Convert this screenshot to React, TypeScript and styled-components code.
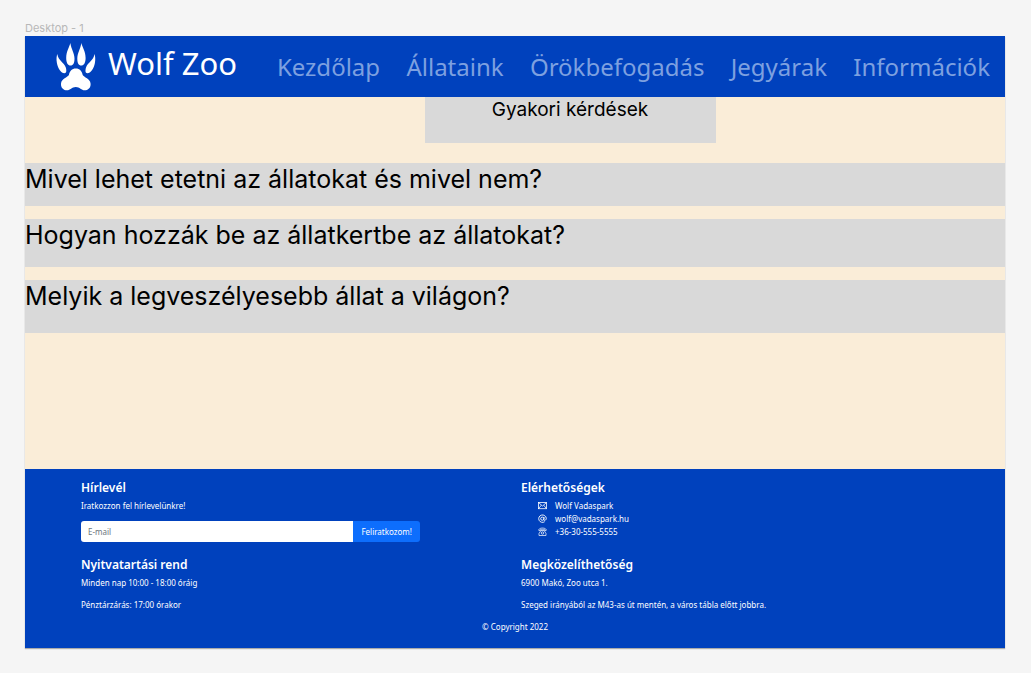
import React from "react";
import styled, { createGlobalStyle } from "styled-components";

const blue = "#0041bd";
const grey = "#d9d9d9";
const cream = "#faedd8";
const uiFont = '"Noto Sans", "Open Sans", sans-serif';
const bodyFont = 'Inter, "Liberation Sans", sans-serif';

const GlobalStyle = createGlobalStyle`
  *, *::before, *::after { box-sizing: border-box; }
  body { margin: 0; background: #f5f5f5; font-family: ${bodyFont}; }
  h1, h2, p, ul { margin: 0; padding: 0; }
  ul { list-style: none; }
`;

const Page = styled.div`
  display: flex;
  flex-direction: column;
  min-height: 100vh;
  padding: 20px 26px 25px 25px;
`;

const FrameLabel = styled.p`
  color: #b8b8b8;
  font-size: 11px;
  line-height: 16px;
`;

const Frame = styled.div`
  flex: 1;
  display: flex;
  flex-direction: column;
  background: ${cream};
  box-shadow: 0 1px 1px rgba(0, 0, 0, 0.3);
`;

const Header = styled.header`
  display: flex;
  align-items: center;
  gap: 40px;
  min-height: 61px;
  padding: 0 15px 0 31px;
  background: ${blue};
  font-family: ${uiFont};
`;

const Brand = styled.a`
  display: flex;
  align-items: center;
  gap: 12px;
  color: #fff;
  text-decoration: none;
  white-space: nowrap;
`;

const BrandName = styled.span`
  padding-bottom: 8px;
  font-size: 31px;
  line-height: 40px;
`;

const Nav = styled.nav`
  flex: 1;
  display: flex;
  justify-content: space-between;
  gap: 12px;
`;

const NavLink = styled.a`
  color: #7da0e0;
  font-size: 24px;
  line-height: 32px;
  text-decoration: none;
`;

const Main = styled.main`
  flex: 1;
  display: flex;
  flex-direction: column;
`;

const TitleRow = styled.div`
  display: flex;
  justify-content: center;
  padding-left: 110px;
  margin-bottom: 20px;
`;

const Title = styled.h1`
  width: 291px;
  max-width: 100%;
  min-height: 46px;
  background: ${grey};
  font-size: 19px;
  font-weight: 400;
  line-height: 25px;
  text-align: center;
`;

const Questions = styled.ul`
  display: flex;
  flex-direction: column;
  gap: 13px;
`;

const Question = styled.li<{ $height: number }>`
  min-height: ${(p) => p.$height}px;
  background: ${grey};
  font-size: 25px;
  line-height: 32px;
`;

const Footer = styled.footer`
  min-height: 179px;
  padding: 10px 56px 14px;
  background: ${blue};
  color: #fff;
  font-family: ${uiFont};
  font-size: 8px;
  line-height: 13px;
`;

const Columns = styled.div`
  display: grid;
  grid-template-columns: 1fr 1fr;
  gap: 0 12px;
`;

const Block = styled.section<{ $height: number }>`
  min-height: ${(p) => p.$height}px;
`;

const Heading = styled.h2`
  margin-bottom: 3px;
  font-size: 12px;
  font-weight: 600;
  line-height: 17px;
`;

const Line = styled.p`
  margin-bottom: 9px;
`;

const FieldLabel = styled.label`
  display: block;
  margin-bottom: 9px;
`;

const Form = styled.form`
  display: flex;
  max-width: 339px;
  height: 21px;
`;

const EmailInput = styled.input`
  flex: 1;
  min-width: 0;
  padding: 0 7px;
  border: 0;
  border-radius: 3px 0 0 3px;
  background: #fff;
  color: #212529;
  font: inherit;

  &::placeholder { color: #6c757d; opacity: 1; }
`;

const Submit = styled.button`
  padding: 0 8px;
  border: 0;
  border-radius: 0 3px 3px 0;
  background: #0d6efd;
  color: #fff;
  font: inherit;
  white-space: nowrap;
`;

const Contact = styled.li`
  display: flex;
  align-items: center;
  gap: 8px;
  padding-left: 17px;
`;

const Copyright = styled.p`
  text-align: center;
`;

const Paw = () => (
  <svg width="40" height="48" viewBox="0 0 40 48" fill="#fff" aria-hidden="true">
    <path d="M14.3 0C13.5 4 10.2 8 10.2 15c0 5 1.800 7.500 4.300 7.500 2.700 0 4-2.600 4-7 0-5.500-3.100-9-4.200-15.500Z" />
    <path d="M25.300 0C24.500 6 21.300 10 21.300 15.500c0 4.400 1.300 7 4 7 2.500 0 4.300-2.500 4.300-7.500C29.600 8 26.200 4 25.300 0Z" />
    <path d="M1.300 11C.6 13 .2 16 .9 20c1 5.500 4.400 10.300 7.400 10.300 2.400 0 2.400-3 1.400-6C8 19.500 2.200 17.500 1.300 11Z" />
    <path d="M38.500 11c.7 2 1.100 5 .4 9-1 5.500-4.400 10.300-7.400 10.300-2.400 0-2.400-3-1.400-6C31.800 19.500 37.600 17.500 38.500 11Z" />
    <path d="M19.800 25.500c4 0 6 2.500 6.900 6.500 1.100 2.400 7.500 3.300 7.900 8.700.3 4.200-2.600 6.600-6 6.600-3.200 0-4.800-3.300-8.800-3.300s-5.600 3.300-8.800 3.300c-3.400 0-6.300-2.400-6-6.600.4-5.400 6.800-6.300 7.900-8.700.9-4 2.900-6.500 6.900-6.500Z" />
  </svg>
);

const Envelope = () => (
  <svg width="9" height="13" viewBox="0 0 9 13" fill="none" stroke="#fff" strokeWidth="0.8" aria-hidden="true">
    <rect x="0.5" y="3.500" width="8" height="6.200" />
    <path d="M.5 3.500 4.500 7l4-3.500M.5 9.700l2.800-3.500M8.500 9.700 5.700 6.200" />
  </svg>
);

const AtSign = () => (
  <svg width="9" height="13" viewBox="0 0 9 13" fill="none" stroke="#fff" strokeWidth="0.9" aria-hidden="true">
    <circle cx="4.300" cy="6.700" r="1.600" />
    <path d="M6.100 4.900 5.800 7.600c0 1.400 2.500.9 2.500-1.300A3.800 3.700 0 1 0 6.700 9.700" />
  </svg>
);

const Phone = () => (
  <svg width="9" height="13" viewBox="0 0 9 13" fill="none" stroke="#fff" strokeWidth="0.7" aria-hidden="true">
    <path d="M.7 5.300C.5 2.300 8.500 2.300 8.300 5.300L6.700 5.700V4.700C5.500 4.200 3.500 4.200 2.300 4.700v1Z" />
    <path d="M2.900 5.500 1 8.500v2h7v-2L6.100 5.500Z" />
    <circle cx="4.500" cy="8" r="1.200" />
  </svg>
);

const links = ["Kezdőlap", "Állataink", "Örökbefogadás", "Jegyárak", "Információk"];

const questions = [
  { text: "Mivel lehet etetni az állatokat és mivel nem?", height: 43 },
  { text: "Hogyan hozzák be az állatkertbe az állatokat?", height: 48 },
  { text: "Melyik a legveszélyesebb állat a világon?", height: 53 },
];

export default function App() {
  return (
    <>
      <GlobalStyle />
      <Page>
        <FrameLabel>Desktop - 1</FrameLabel>
        <Frame>
          <Header>
            <Brand href="#">
              <Paw />
              <BrandName>Wolf Zoo</BrandName>
            </Brand>
            <Nav>
              {links.map((link) => (
                <NavLink href="#" key={link}>{link}</NavLink>
              ))}
            </Nav>
          </Header>
          <Main>
            <TitleRow>
              <Title>Gyakori kérdések</Title>
            </TitleRow>
            <Questions>
              {questions.map((q) => (
                <Question key={q.text} $height={q.height}>{q.text}</Question>
              ))}
            </Questions>
          </Main>
          <Footer>
            <Columns>
              <Block $height={77}>
                <Heading>Hírlevél</Heading>
                <FieldLabel htmlFor="email">Iratkozzon fel hírlevelünkre!</FieldLabel>
                <Form onSubmit={(e) => e.preventDefault()}>
                  <EmailInput id="email" type="email" placeholder="E-mail" />
                  <Submit type="submit">Feliratkozom!</Submit>
                </Form>
              </Block>
              <Block $height={77}>
                <Heading>Elérhetőségek</Heading>
                <ul>
                  <Contact><Envelope />Wolf Vadaspark</Contact>
                  <Contact><AtSign />wolf@vadaspark.hu</Contact>
                  <Contact><Phone />+36-30-555-5555</Contact>
                </ul>
              </Block>
              <Block $height={64}>
                <Heading>Nyitvatartási rend</Heading>
                <Line>Minden nap 10:00 - 18:00 óráig</Line>
                <Line>Pénztárzárás: 17:00 órakor</Line>
              </Block>
              <Block $height={64}>
                <Heading>Megközelíthetőség</Heading>
                <Line>6900 Makó, Zoo utca 1.</Line>
                <Line>Szeged irányából az M43-as út mentén, a város tábla előtt jobbra.</Line>
              </Block>
            </Columns>
            <Copyright>© Copyright 2022</Copyright>
          </Footer>
        </Frame>
      </Page>
    </>
  );
}
